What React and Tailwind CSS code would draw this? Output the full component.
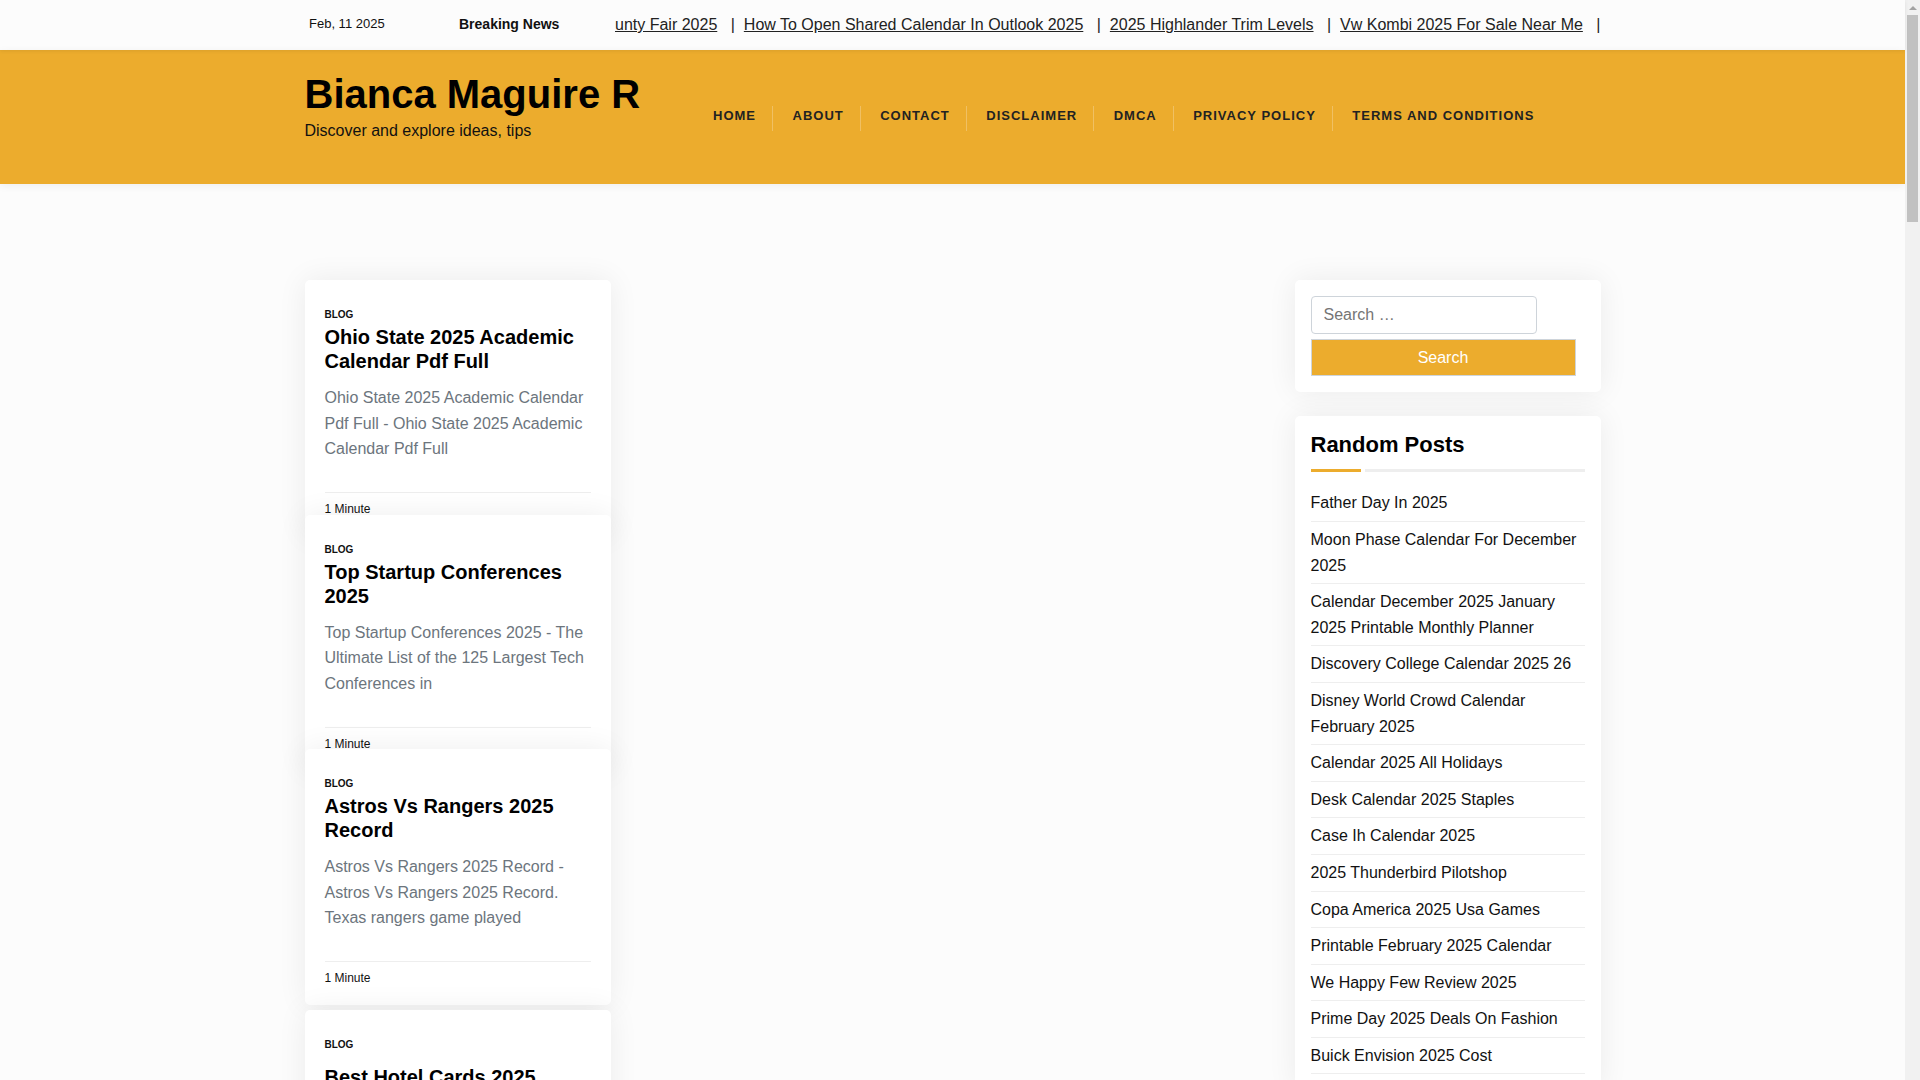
import React from 'react'

const menu = ['HOME', 'ABOUT', 'CONTACT', 'DISCLAIMER', 'DMCA', 'PRIVACY POLICY', 'TERMS AND CONDITIONS']

const news = ['How To Open Shared Calendar In Outlook 2025', '2025 Highlander Trim Levels', 'Vw Kombi 2025 For Sale Near Me']

const posts = [
  { title: 'Ohio State 2025 Academic Calendar Pdf Full', text: 'Ohio State 2025 Academic Calendar Pdf Full - Ohio State 2025 Academic Calendar Pdf Full' },
  { title: 'Top Startup Conferences 2025', text: 'Top Startup Conferences 2025 - The Ultimate List of the 125 Largest Tech Conferences in' },
  { title: 'Astros Vs Rangers 2025 Record', text: 'Astros Vs Rangers 2025 Record - Astros Vs Rangers 2025 Record. Texas rangers game played' },
]

const randomPosts = [
  'Father Day In 2025',
  'Moon Phase Calendar For December 2025',
  'Calendar December 2025 January 2025 Printable Monthly Planner',
  'Discovery College Calendar 2025 26',
  'Disney World Crowd Calendar February 2025',
  'Calendar 2025 All Holidays',
  'Desk Calendar 2025 Staples',
  'Case Ih Calendar 2025',
  '2025 Thunderbird Pilotshop',
  'Copa America 2025 Usa Games',
  'Printable February 2025 Calendar',
  'We Happy Few Review 2025',
  'Prime Day 2025 Deals On Fashion',
  'Buick Envision 2025 Cost',
]

const PostCard = ({ post }) => (
  <article className="relative w-[306px] h-[256px] shrink-0 -mb-[21.5px] bg-white rounded-[5px] shadow-[0_0_30px_rgba(0,0,0,0.07)] px-5 pt-[28px]">
    <div className="text-[10px] leading-[14px] font-bold text-[#111]">BLOG</div>
    <h2 className="mt-[3px] text-xl leading-6 font-bold text-black">{post.title}</h2>
    <p className="mt-3 h-[77px] text-base leading-[25.6px] text-[#6c757d]">{post.text}</p>
    <div className="mt-[30px] border-t border-[#eee] pt-1.5 text-xs leading-5 text-[#111]">1 Minute</div>
  </article>
)

export default function App() {
  return (
    <div className="h-[1080px] overflow-hidden flex bg-[#fcfcfc] font-['Liberation_Sans',Arial,sans-serif]">
      <div className="flex-1 min-w-0">
        <div className="relative h-[50px] flex items-center pl-[309px] shadow-[0_1px_4px_rgba(0,0,0,0.08)]">
          <span className="w-[150px] text-[13px] -mt-[2px] text-[#111]">Feb, 11 2025</span>
          <span className="w-[156px] text-sm font-bold -mt-[2px] text-[#111]">Breaking News</span>
          <div className="w-[987px] overflow-hidden flex text-base text-[#222] whitespace-nowrap">
            <span className="underline">unty Fair 2025</span>
            {news.map((item) => (
              <span key={item} className="flex">
                <span className="ml-[13.4px] mr-[9px]">|</span>
                <span className="underline">{item}</span>
              </span>
            ))}
            <span className="ml-[13.4px]">|</span>
          </div>
        </div>

        <header className="h-[134px] bg-[#ecac2d] flex pl-[304.5px] shadow-[0_2px_8px_rgba(0,0,0,0.06)]">
          <div className="w-[389px] pt-[20px]">
            <h1 className="text-[40px] leading-[48px] font-bold text-black">Bianca Maguire R</h1>
            <p className="mt-[1px] text-base leading-6 text-[#111]">Discover and explore ideas, tips</p>
          </div>
          <nav className="flex items-start pt-[56px]">
            {menu.map((item, i) => (
              <a key={item} className={`pl-[19.5px] pr-4 h-[25px] text-[13px] leading-[19px] font-bold tracking-[1px] text-[#222] ${i < menu.length - 1 ? 'border-r border-[#f0c063]' : ''}`}>{item}</a>
            ))}
          </nav>
        </header>

        <main className="flex justify-between pl-[304.5px] pr-[304.5px] pt-[96px]">
          <section className="flex flex-col">
            {posts.map((post) => (
              <PostCard key={post.title} post={post} />
            ))}
            <article className="relative w-[306px] mt-[26.5px] h-[300px] bg-white rounded-[5px] shadow-[0_0_30px_rgba(0,0,0,0.07)] px-5 pt-[28px]">
              <div className="text-[10px] leading-[14px] font-bold text-[#111]">BLOG</div>
              <h2 className="mt-[13px] text-xl leading-6 font-bold text-black">Best Hotel Cards 2025</h2>
            </article>
          </section>

          <aside className="w-[306px] flex flex-col gap-6">
            <div className="h-[112px] bg-white rounded-[5px] shadow-[0_0_30px_rgba(0,0,0,0.07)] px-4 pt-4">
              <input readOnly placeholder="Search …" className="block w-[226px] h-[38px] border border-[#ced4da] rounded-[4px] px-3 text-base text-[#495057] placeholder:text-[#757575] outline-none" />
              <button className="block mt-[5px] w-[265px] h-[37px] bg-[#ecac2d] text-white text-base border border-[#ced4da]">Search</button>
            </div>
            <div className="bg-white rounded-[5px] shadow-[0_0_30px_rgba(0,0,0,0.07)] px-4 pt-[13px] pb-4">
              <h2 className="text-[22px] leading-8 font-bold text-black">Random Posts</h2>
              <div className="flex gap-1 mt-2 mb-[13.4px]">
                <div className="h-[3px] w-[50px] bg-[#ecac2d]"></div>
                <div className="h-[3px] flex-1 bg-[#eee]"></div>
              </div>
              <ul>
                {randomPosts.map((item) => (
                  <li key={item} className="border-b border-[#eee] py-[5px] text-base leading-[25.6px] text-[#111]">{item}</li>
                ))}
              </ul>
            </div>
          </aside>
        </main>
      </div>

      <div className="w-[15px] bg-[#f1f1f1] flex flex-col items-center">
        <div className="h-[15px] flex items-center justify-center">
          <div className="w-0 h-0 border-x-4 border-x-transparent border-b-4 border-b-[#a3a3a3]"></div>
        </div>
        <div className="w-[11px] h-[207px] bg-[#c1c1c1]"></div>
      </div>
    </div>
  )
}
